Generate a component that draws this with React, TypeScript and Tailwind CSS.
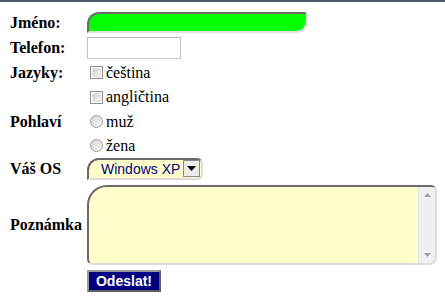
import React from "react";

const serif = { fontFamily: '"Liberation Serif", "Times New Roman", serif' };
const sans = { fontFamily: '"Liberation Sans", Arial, sans-serif' };

function Checkbox() {
  return (
    <span className="inline-block w-[13px] h-[13px] border border-[#8e8f8f] bg-white p-[1px] mr-[3px]">
      <span className="block w-full h-full bg-gradient-to-br from-[#cfcfcf] to-[#f4f4f4] border border-[#e3e3e3]" />
    </span>
  );
}

function Radio() {
  return (
    <span className="inline-block w-[13px] h-[13px] rounded-full border border-[#9a9a9a] bg-gradient-to-br from-[#d3d3d3] to-[#f8f8f8] mr-[3px] ml-[1px]" />
  );
}

function Label({ children }: { children: React.ReactNode }) {
  return (
    <div className="w-[77px] shrink-0 font-bold text-[16px] text-black leading-none" style={serif}>
      {children}
    </div>
  );
}

export default function App() {
  return (
    <div className="w-[445px] h-[302px] bg-white overflow-hidden">
      <div className="h-[2px] bg-[#4b5a66]" />
      <div className="pl-[10px] pt-[8px] flex flex-col" style={serif}>
        <div className="flex items-center h-[25px]">
          <Label>Jméno:</Label>
          <div className="w-[221px] h-[21px] bg-[#00ff00] border-2 border-t-[#6b6b6b] border-l-[#6b6b6b] border-r-[#e2e2e2] border-b-[#e2e2e2] rounded-[12px_4px_12px_0]" />
        </div>
        <div className="flex items-center h-[25px]">
          <Label>Telefon:</Label>
          <div className="w-[94px] h-[22px] bg-white border border-[#c3c3c3] border-t-[#b5b5b5]" />
        </div>
        <div className="flex items-center h-[25px]">
          <Label>Jazyky:</Label>
          <div className="flex items-center text-[16px] pl-[3px]">
            <Checkbox />
            <span>čeština</span>
          </div>
        </div>
        <div className="flex items-center h-[24px]">
          <Label>{""}</Label>
          <div className="flex items-center text-[16px] pl-[3px]">
            <Checkbox />
            <span>angličtina</span>
          </div>
        </div>
        <div className="flex items-center h-[25px]">
          <Label>Pohlaví</Label>
          <div className="flex items-center text-[16px] pl-[2px]">
            <Radio />
            <span>muž</span>
          </div>
        </div>
        <div className="flex items-center h-[23px]">
          <Label>{""}</Label>
          <div className="flex items-center text-[16px] pl-[2px]">
            <Radio />
            <span>žena</span>
          </div>
        </div>
        <div className="flex items-center h-[23px]">
          <Label>Váš OS</Label>
          <div className="w-[116px] h-[22px] bg-[#ffffcc] border-2 border-t-[#6b6b6b] border-l-[#6b6b6b] border-r-[#dcdcdc] border-b-[#dcdcdc] rounded-[12px_6px_6px_0] flex items-center pl-[12px] pr-[1px]">
            <span className="text-[14px] text-[#000080] leading-none flex-1" style={sans}>Windows XP</span>
            <span className="w-[17px] h-[17px] bg-[#ececec] border border-[#8a8a8a] flex items-center justify-center">
              <svg width="9" height="5" viewBox="0 0 9 5"><path d="M0 0H9L4.5 5Z" fill="#000" /></svg>
            </span>
          </div>
        </div>
        <div className="flex items-center mt-[5px] h-[80px]">
          <Label>Poznámka</Label>
          <div className="w-[350px] h-[80px] bg-[#ffffcc] border-2 border-t-[#6b6b6b] border-l-[#6b6b6b] border-r-[#dcdcdc] border-b-[#dcdcdc] rounded-[20px_6px_8px_6px] flex justify-end overflow-hidden">
            <div className="w-[17px] h-full bg-[#f0f0f0] border-l border-[#e6e6e6] flex flex-col items-center justify-between py-[6px]">
              <svg width="7" height="4" viewBox="0 0 7 4"><path d="M0 4H7L3.5 0Z" fill="#a0a0a0" /></svg>
              <svg width="7" height="4" viewBox="0 0 7 4"><path d="M0 0H7L3.5 4Z" fill="#a0a0a0" /></svg>
            </div>
          </div>
        </div>
        <div className="flex items-center mt-[5px] h-[22px]">
          <Label>{""}</Label>
          <button className="w-[74px] h-[22px] bg-[#000080] text-white font-bold text-[14px] leading-none border-2 border-t-[#9a9a9a] border-l-[#9a9a9a] border-r-[#5f5f5f] border-b-[#5f5f5f] flex items-center justify-center" style={sans}>
            Odeslat!
          </button>
        </div>
      </div>
    </div>
  );
}
